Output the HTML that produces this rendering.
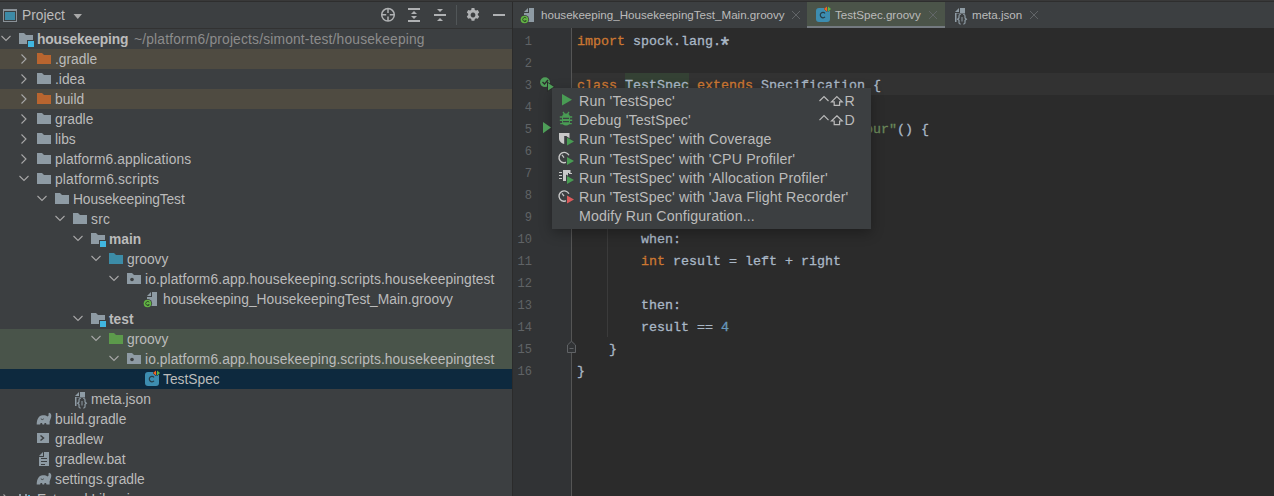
<!DOCTYPE html>
<html><head><meta charset="utf-8">
<style>
html,body{margin:0;padding:0;}
body{width:1274px;height:496px;overflow:hidden;position:relative;background:#3C3F41;font-family:"Liberation Sans",sans-serif;}
.ab{position:absolute;}
.tt{position:absolute;white-space:pre;font-size:13.8px;line-height:20px;color:#BBBBBB;}
.code{position:absolute;white-space:pre;font-family:"Liberation Mono",monospace;font-size:13.33px;line-height:22px;color:#A9B7C6;-webkit-text-stroke:0.3px currentColor;}
.kw{color:#CC7832;}
.str{color:#6A8759;}
.num{color:#6897BB;}
.ln{position:absolute;width:40px;text-align:right;font-family:"Liberation Mono",monospace;font-size:12px;line-height:22px;color:#606366;}
.mi{position:absolute;white-space:pre;font-size:14.2px;letter-spacing:0.15px;line-height:19px;color:#BBBBBB;}
svg{position:absolute;overflow:visible;}
</style></head><body>

<div class="ab" style="left:0;top:0;width:1274px;height:1px;background:#393939"></div>
<div class="ab" style="left:0;top:1px;width:1274px;height:1px;background:#2E2E2E"></div>
<div class="ab" style="left:0;top:28px;width:512px;height:1px;background:#323232"></div>
<svg style="left:0;top:0" width="20" height="28"><rect x="3.5" y="9.5" width="13" height="12" fill="none" stroke="#8A9197" stroke-width="1"/><rect x="3" y="9" width="14" height="2" fill="#8A9197"/><rect x="5" y="12" width="10" height="8" fill="#3D8AA6"/></svg>
<div class="tt" style="left:22px;top:6px;font-size:13.8px;color:#BBBBBB">Project</div>
<svg style="left:0;top:0" width="90" height="28"><path d="M73.5,14 L82,14 L77.75,19 Z" fill="#A8A8A8"/></svg>
<svg style="left:0;top:0" width="512" height="28">
<g stroke="#AFB1B3" fill="none" stroke-width="1.5">
<circle cx="388" cy="14.8" r="6.3"/>
<path d="M388,8.5 V13 M388,16.6 V21.1 M381.7,14.8 H386.2 M389.8,14.8 H394.3"/>
</g>
<g fill="#AFB1B3">
<rect x="408" y="8" width="12" height="2"/><rect x="408" y="20" width="12" height="2"/>
<path d="M411,14 L417,14 L414,11 Z"/><path d="M411,16 L417,16 L414,19 Z"/>
<rect x="434" y="14" width="12" height="2"/>
<path d="M437,9 L443,9 L440,12 Z"/><path d="M437,21 L443,21 L440,18 Z"/>
</g>
<rect x="456" y="5" width="1" height="20" fill="#515658"/>
<rect x="493" y="14" width="12" height="2" fill="#AFB1B3"/>
</svg>
<svg style="left:465px;top:7px" width="16" height="16" viewBox="0 0 16 16">
<path fill="#AFB1B3" fill-rule="evenodd" d="M6.6,1 h2.8 l0.4,1.9 l1.2,0.7 l1.8,-0.6 l1.4,2.4 l-1.4,1.3 v1.4 l1.4,1.3 l-1.4,2.4 l-1.8,-0.6 l-1.2,0.7 l-0.4,1.9 h-2.8 l-0.4,-1.9 l-1.2,-0.7 l-1.8,0.6 l-1.4,-2.4 l1.4,-1.3 v-1.4 l-1.4,-1.3 l1.4,-2.4 l1.8,0.6 l1.2,-0.7 z M8,5.6 a2.4,2.4 0 1,0 0.01,0 z"/>
</svg>
<svg style="left:0;top:0" width="512" height="496"><path d="M1.5,36 L6,40.5 L10.5,36" fill="none" stroke="#A7A7A7" stroke-width="1.1"/><path d="M19,33 H24 L26,35 H33 V44 H19 Z" fill="#8E9BA4"/><rect x="27" y="40" width="8" height="7" fill="#3C3F41"/><rect x="28" y="41" width="6" height="6" fill="#40B6E0"/></svg>
<div class="tt" style="left:37px;top:30px;font-weight:bold;letter-spacing:-0.12px">housekeeping</div>
<div class="tt" style="left:134px;top:30px;color:#8C8C8C;letter-spacing:0.18px">~/platform6/projects/simont-test/housekeeping</div>
<div class="ab" style="left:0;top:49px;width:512px;height:20px;background:#4F4B41"></div>
<svg style="left:0;top:0" width="512" height="496"><path d="M21.5,54.5 L26,59 L21.5,63.5" fill="none" stroke="#A7A7A7" stroke-width="1.1"/><path d="M37,53 H42 L44,55 H51 V64 H37 Z" fill="#B9652F"/></svg>
<div class="tt" style="left:55px;top:50px">.gradle</div>
<svg style="left:0;top:0" width="512" height="496"><path d="M21.5,74.5 L26,79 L21.5,83.5" fill="none" stroke="#A7A7A7" stroke-width="1.1"/><path d="M37,73 H42 L44,75 H51 V84 H37 Z" fill="#8E9BA4"/></svg>
<div class="tt" style="left:55px;top:70px">.idea</div>
<div class="ab" style="left:0;top:89px;width:512px;height:20px;background:#4F4B41"></div>
<svg style="left:0;top:0" width="512" height="496"><path d="M21.5,94.5 L26,99 L21.5,103.5" fill="none" stroke="#A7A7A7" stroke-width="1.1"/><path d="M37,93 H42 L44,95 H51 V104 H37 Z" fill="#B9652F"/></svg>
<div class="tt" style="left:55px;top:90px">build</div>
<svg style="left:0;top:0" width="512" height="496"><path d="M21.5,114.5 L26,119 L21.5,123.5" fill="none" stroke="#A7A7A7" stroke-width="1.1"/><path d="M37,113 H42 L44,115 H51 V124 H37 Z" fill="#8E9BA4"/></svg>
<div class="tt" style="left:55px;top:110px">gradle</div>
<svg style="left:0;top:0" width="512" height="496"><path d="M21.5,134.5 L26,139 L21.5,143.5" fill="none" stroke="#A7A7A7" stroke-width="1.1"/><path d="M37,133 H42 L44,135 H51 V144 H37 Z" fill="#8E9BA4"/></svg>
<div class="tt" style="left:55px;top:130px">libs</div>
<svg style="left:0;top:0" width="512" height="496"><path d="M21.5,154.5 L26,159 L21.5,163.5" fill="none" stroke="#A7A7A7" stroke-width="1.1"/><path d="M37,153 H42 L44,155 H51 V164 H37 Z" fill="#8E9BA4"/></svg>
<div class="tt" style="left:55px;top:150px;letter-spacing:0.09px">platform6.applications</div>
<svg style="left:0;top:0" width="512" height="496"><path d="M19.5,176 L24,180.5 L28.5,176" fill="none" stroke="#A7A7A7" stroke-width="1.1"/><path d="M37,173 H42 L44,175 H51 V184 H37 Z" fill="#8E9BA4"/></svg>
<div class="tt" style="left:55px;top:170px;letter-spacing:0.17px">platform6.scripts</div>
<svg style="left:0;top:0" width="512" height="496"><path d="M37.5,196 L42,200.5 L46.5,196" fill="none" stroke="#A7A7A7" stroke-width="1.1"/><path d="M55,193 H60 L62,195 H69 V204 H55 Z" fill="#8E9BA4"/></svg>
<div class="tt" style="left:73px;top:190px;letter-spacing:-0.12px">HousekeepingTest</div>
<svg style="left:0;top:0" width="512" height="496"><path d="M55.5,216 L60,220.5 L64.5,216" fill="none" stroke="#A7A7A7" stroke-width="1.1"/><path d="M73,213 H78 L80,215 H87 V224 H73 Z" fill="#8E9BA4"/></svg>
<div class="tt" style="left:91px;top:210px;letter-spacing:0.3px">src</div>
<svg style="left:0;top:0" width="512" height="496"><path d="M73.5,236 L78,240.5 L82.5,236" fill="none" stroke="#A7A7A7" stroke-width="1.1"/><path d="M91,233 H96 L98,235 H105 V244 H91 Z" fill="#8E9BA4"/><rect x="99" y="240" width="8" height="7" fill="#3C3F41"/><rect x="100" y="241" width="6" height="6" fill="#40B6E0"/></svg>
<div class="tt" style="left:109px;top:230px;font-weight:bold">main</div>
<svg style="left:0;top:0" width="512" height="496"><path d="M91.5,256 L96,260.5 L100.5,256" fill="none" stroke="#A7A7A7" stroke-width="1.1"/><path d="M109,253 H114 L116,255 H123 V264 H109 Z" fill="#3C8CA7"/></svg>
<div class="tt" style="left:127px;top:250px">groovy</div>
<svg style="left:0;top:0" width="512" height="496"><path d="M109.5,276 L114,280.5 L118.5,276" fill="none" stroke="#A7A7A7" stroke-width="1.1"/><path d="M127,273 H132 L134,275 H141 V284 H127 Z" fill="#8E9BA4"/><circle cx="132" cy="279.5" r="1.8" fill="#3C3F41"/></svg>
<div class="tt" style="left:145px;top:270px;letter-spacing:0.095px">io.platform6.app.housekeeping.scripts.housekeepingtest</div>
<svg style="left:0;top:0" width="512" height="496"><path d="M152,292 H157 V306 H147 V297 H152 Z" fill="#8E9BA4"/><path d="M151,292 V296 H147 Z" fill="#8E9BA4"/><circle cx="147.5" cy="303.5" r="4.6" fill="#3C3F41"/><circle cx="147.5" cy="303.5" r="3.8" fill="#62B543"/><path d="M149.3,302.2 A2,2 0 1,0 149.3,304.8 H147.5" fill="none" stroke="#2F4A2A" stroke-width="1"/></svg>
<div class="tt" style="left:163px;top:290px">housekeeping_HousekeepingTest_Main.groovy</div>
<svg style="left:0;top:0" width="512" height="496"><path d="M73.5,316 L78,320.5 L82.5,316" fill="none" stroke="#A7A7A7" stroke-width="1.1"/><path d="M91,313 H96 L98,315 H105 V324 H91 Z" fill="#8E9BA4"/><rect x="99" y="320" width="8" height="7" fill="#3C3F41"/><rect x="100" y="321" width="6" height="6" fill="#40B6E0"/></svg>
<div class="tt" style="left:109px;top:310px;font-weight:bold">test</div>
<div class="ab" style="left:0;top:329px;width:512px;height:20px;background:#49544A"></div>
<svg style="left:0;top:0" width="512" height="496"><path d="M91.5,336 L96,340.5 L100.5,336" fill="none" stroke="#A7A7A7" stroke-width="1.1"/><path d="M109,333 H114 L116,335 H123 V344 H109 Z" fill="#5C9A4B"/></svg>
<div class="tt" style="left:127px;top:330px">groovy</div>
<div class="ab" style="left:0;top:349px;width:512px;height:20px;background:#49544A"></div>
<svg style="left:0;top:0" width="512" height="496"><path d="M109.5,356 L114,360.5 L118.5,356" fill="none" stroke="#A7A7A7" stroke-width="1.1"/><path d="M127,353 H132 L134,355 H141 V364 H127 Z" fill="#8E9BA4"/><circle cx="132" cy="359.5" r="1.8" fill="#3C3F41"/></svg>
<div class="tt" style="left:145px;top:350px;letter-spacing:0.095px">io.platform6.app.housekeeping.scripts.housekeepingtest</div>
<div class="ab" style="left:0;top:369px;width:512px;height:20px;background:#0D293E"></div>
<svg style="left:0;top:0" width="512" height="496"><rect x="145" y="372" width="14" height="14" rx="3" fill="#3D8DB0"/><path d="M154,377.3 A2.7,2.7 0 1,0 154,380.9" fill="none" stroke="#253E4A" stroke-width="1.2"/><path d="M156,370.5 V375.5 L153,373 Z" fill="#F26522" stroke="#0D293E" stroke-width="1" paint-order="stroke"/><path d="M157,370.5 V375.5 L160,373 Z" fill="#62B543" stroke="#0D293E" stroke-width="1" paint-order="stroke"/></svg>
<div class="tt" style="left:163px;top:370px">TestSpec</div>
<svg style="left:0;top:0" width="512" height="496"><path d="M80,392 H85 V406 H75 V397 H80 Z" fill="#8E9BA4"/><path d="M79,392 V396 H75 Z" fill="#8E9BA4"/><rect x="76.5" y="397.5" width="11" height="11" fill="#3C3F41"/><path d="M80.8,398.5 H80.2 Q79,398.5 79,400 V402 L77.6,403.2 L79,404.4 V406.5 Q79,408 80.2,408 H80.8 M83.2,398.5 H83.8 Q85,398.5 85,400 V402 L86.4,403.2 L85,404.4 V406.5 Q85,408 83.8,408 H83.2" fill="none" stroke="#8E9BA4" stroke-width="1.2"/><path d="M82,401 V405.5" stroke="#8E9BA4" stroke-width="1"/></svg>
<div class="tt" style="left:91px;top:390px">meta.json</div>
<svg style="left:0;top:0" width="512" height="496"><path d="M36.7,424.6 C36.7,419 39,415.3 42.5,415.2 C45,415.1 46.5,415.5 47.5,416.6 C48.5,415.8 49.3,414.8 48.3,414.2 L49,412.8 C51.6,413 52,416.5 50.3,419.5 L49.6,421.5 V424.6 H46.5 L46,423 H44.6 L44.1,424.6 H42.5 L42,423 H40.6 L40.1,424.6 Z" fill="#8E9BA4"/><path d="M40.8,418.8 Q42.3,420.4 43.8,418.8" fill="none" stroke="#3C3F41" stroke-width="0.9"/></svg>
<div class="tt" style="left:55px;top:410px">build.gradle</div>
<svg style="left:0;top:0" width="512" height="496"><rect x="37" y="433" width="12" height="10" fill="#8E9BA4"/><path d="M40.5,435.5 L43.5,438 L40.5,440.5" fill="none" stroke="#3C3F41" stroke-width="1.5"/></svg>
<div class="tt" style="left:55px;top:430px">gradlew</div>
<svg style="left:0;top:0" width="512" height="496"><path d="M44,452 H49 V466 H39 V457 H44 Z" fill="#8E9BA4"/><path d="M43,452 V456 H39 Z" fill="#8E9BA4"/><path d="M41,458.5 H47 M41,461.5 H47 M41,464.5 H45" stroke="#3C3F41" stroke-width="1"/></svg>
<div class="tt" style="left:55px;top:450px">gradlew.bat</div>
<svg style="left:0;top:0" width="512" height="496"><path d="M36.7,484.6 C36.7,479 39,475.3 42.5,475.2 C45,475.1 46.5,475.5 47.5,476.6 C48.5,475.8 49.3,474.8 48.3,474.2 L49,472.8 C51.6,473 52,476.5 50.3,479.5 L49.6,481.5 V484.6 H46.5 L46,483 H44.6 L44.1,484.6 H42.5 L42,483 H40.6 L40.1,484.6 Z" fill="#8E9BA4"/><path d="M40.8,478.8 Q42.3,480.4 43.8,478.8" fill="none" stroke="#3C3F41" stroke-width="0.9"/></svg>
<div class="tt" style="left:55px;top:470px">settings.gradle</div>
<svg style="left:0;top:0" width="512" height="496"><path d="M3.5,494.5 L8,499 L3.5,503.5" fill="none" stroke="#A7A7A7" stroke-width="1.1"/><rect x="19" y="494" width="2" height="11" fill="#8E9BA4"/><rect x="22" y="496" width="2" height="9" fill="#62B543"/><rect x="25" y="494" width="2" height="11" fill="#8E9BA4"/><rect x="28" y="495" width="2" height="10" fill="#40B6E0"/></svg>
<div class="tt" style="left:37px;top:490px">External Libraries</div>
<div class="ab" style="left:512px;top:2px;width:1px;height:494px;background:#2B2B2B"></div>
<div class="ab" style="left:513px;top:2px;width:761px;height:26px;background:#3C3F41"></div>
<div class="ab" style="left:807px;top:2px;width:138px;height:26px;background:#4B5449"></div>
<div class="ab" style="left:807px;top:26px;width:138px;height:3px;background:#747A80"></div>
<div class="tt" style="left:541px;top:5px;font-size:11.6px;line-height:20px">housekeeping_HousekeepingTest_Main.groovy</div>
<div class="tt" style="left:835px;top:5px;font-size:11.6px;line-height:20px">TestSpec.groovy</div>
<div class="tt" style="left:972px;top:5px;font-size:11.6px;line-height:20px">meta.json</div>
<svg style="left:0;top:0" width="1274" height="30"><path d="M529,8 H534 V22 H524 V13 H529 Z" fill="#8E9BA4"/><path d="M528,8 V12 H524 Z" fill="#8E9BA4"/><circle cx="524.5" cy="19.5" r="4.6" fill="#3C3F41"/><circle cx="524.5" cy="19.5" r="3.8" fill="#62B543"/><path d="M526.3,18.2 A2,2 0 1,0 526.3,20.8 H524.5" fill="none" stroke="#2F4A2A" stroke-width="1"/><rect x="816" y="8" width="14" height="14" rx="3" fill="#3D8DB0"/><path d="M825,13.3 A2.7,2.7 0 1,0 825,16.9" fill="none" stroke="#253E4A" stroke-width="1.2"/><path d="M827,6.5 V11.5 L824,9 Z" fill="#F26522" stroke="#4B5449" stroke-width="1" paint-order="stroke"/><path d="M828,6.5 V11.5 L831,9 Z" fill="#62B543" stroke="#4B5449" stroke-width="1" paint-order="stroke"/><path d="M960,8 H965 V22 H955 V13 H960 Z" fill="#8E9BA4"/><path d="M959,8 V12 H955 Z" fill="#8E9BA4"/><rect x="956.5" y="13.5" width="11" height="11" fill="#3C3F41"/><path d="M960.8,14.5 H960.2 Q959,14.5 959,16 V18 L957.6,19.2 L959,20.4 V22.5 Q959,24 960.2,24 H960.8 M963.2,14.5 H963.8 Q965,14.5 965,16 V18 L966.4,19.2 L965,20.4 V22.5 Q965,24 963.8,24 H963.2" fill="none" stroke="#8E9BA4" stroke-width="1.2"/><path d="M962,17 V21.5" stroke="#8E9BA4" stroke-width="1"/></svg>
<svg style="left:0;top:0" width="1274" height="30"><path d="M792,11 L800,19 M800,11 L792,19" stroke="#65696C" stroke-width="0.9" fill="none"/><path d="M929,11 L937,19 M937,11 L929,19" stroke="#65696C" stroke-width="0.9" fill="none"/><path d="M1030,11 L1038,19 M1038,11 L1030,19" stroke="#65696C" stroke-width="0.9" fill="none"/></svg>
<div class="ab" style="left:513px;top:28px;width:761px;height:468px;background:#2B2B2B"></div>
<div class="ab" style="left:513px;top:28px;width:58px;height:468px;background:#313335"></div>
<div class="ab" style="left:571px;top:28px;width:1px;height:468px;background:#555555"></div>
<div class="ab" style="left:572px;top:73px;width:702px;height:22px;background:#323232"></div>
<div class="ab" style="left:625px;top:73px;width:64px;height:22px;background:#344134"></div>
<div class="ln" style="left:492px;top:30.5px">1</div>
<div class="ln" style="left:492px;top:52.5px">2</div>
<div class="ln" style="left:492px;top:74.5px">3</div>
<div class="ln" style="left:492px;top:96.5px">4</div>
<div class="ln" style="left:492px;top:118.5px">5</div>
<div class="ln" style="left:492px;top:140.5px">6</div>
<div class="ln" style="left:492px;top:162.5px">7</div>
<div class="ln" style="left:492px;top:184.5px">8</div>
<div class="ln" style="left:492px;top:206.5px">9</div>
<div class="ln" style="left:492px;top:228.5px">10</div>
<div class="ln" style="left:492px;top:250.5px">11</div>
<div class="ln" style="left:492px;top:272.5px">12</div>
<div class="ln" style="left:492px;top:294.5px">13</div>
<div class="ln" style="left:492px;top:316.5px">14</div>
<div class="ln" style="left:492px;top:338.5px">15</div>
<div class="ln" style="left:492px;top:360.5px">16</div>
<div class="code" style="left:577px;top:30.5px"><span class="kw">import</span> spock.lang.<span style="display:inline-block;width:8px;transform:translate(0px,4.4px) scale(1.6);transform-origin:50% 40%">*</span></div>
<div class="code" style="left:577px;top:74.5px"><span class="kw">class</span> TestSpec <span class="kw">extends</span> Specification {</div>
<div class="code" style="left:577px;top:118.5px">    <span class="kw">def</span> <span class="str">"two plus two should equal four"</span>() {</div>
<div class="code" style="left:577px;top:140.5px">        given:</div>
<div class="code" style="left:577px;top:162.5px">        <span class="kw">int</span> left = 2</div>
<div class="code" style="left:577px;top:184.5px">        <span class="kw">int</span> right = 2</div>
<div class="code" style="left:577px;top:228.5px">        when:</div>
<div class="code" style="left:577px;top:250.5px">        <span class="kw">int</span> result = left + right</div>
<div class="code" style="left:577px;top:294.5px">        then:</div>
<div class="code" style="left:577px;top:316.5px">        result == <span class="num">4</span></div>
<div class="code" style="left:577px;top:338.5px">    }</div>
<div class="code" style="left:577px;top:360.5px">}</div>
<div class="ab" style="left:607px;top:139px;width:1px;height:198px;background:#3B3B3B"></div>
<div class="ab" style="left:552px;top:88px;width:319px;height:141px;background:#3C3F41;box-shadow:0 4px 12px rgba(0,0,0,0.3)"></div>
<div class="mi" style="left:579px;top:92.0px">Run 'TestSpec'</div>
<div class="mi" style="left:579px;top:111.2px">Debug 'TestSpec'</div>
<div class="mi" style="left:579px;top:130.4px">Run 'TestSpec' with Coverage</div>
<div class="mi" style="left:579px;top:149.6px">Run 'TestSpec' with 'CPU Profiler'</div>
<div class="mi" style="left:579px;top:168.8px">Run 'TestSpec' with 'Allocation Profiler'</div>
<div class="mi" style="left:579px;top:188.0px">Run 'TestSpec' with 'Java Flight Recorder'</div>
<div class="mi" style="left:579px;top:207.2px">Modify Run Configuration...</div>
<svg style="left:0;top:0" width="1274" height="300"><path d="M819.5,101 L824,96.5 L828.5,101" fill="none" stroke="#BBBBBB" stroke-width="1.2"/><path d="M836.9,96.6 L842.3,101.8 H839.6 V105.4 H834.2 V101.8 H831.5 Z" fill="none" stroke="#BBBBBB" stroke-width="1.2" stroke-linejoin="miter"/><path d="M819.5,120.2 L824,115.7 L828.5,120.2" fill="none" stroke="#BBBBBB" stroke-width="1.2"/><path d="M836.9,115.8 L842.3,121.0 H839.6 V124.60000000000001 H834.2 V121.0 H831.5 Z" fill="none" stroke="#BBBBBB" stroke-width="1.2" stroke-linejoin="miter"/></svg>
<div class="mi" style="left:844.5px;top:92px;letter-spacing:0">R</div>
<div class="mi" style="left:844.5px;top:111.2px;letter-spacing:0">D</div>
<svg style="left:0;top:0" width="1274" height="496"><path d="M562,94 L572,99.8 L562,105.6 Z" fill="#499C54"/><path d="M563,112 L565,114.8 M569,112 L567,114.8" stroke="#499C54" stroke-width="1.3"/><rect x="562" y="113.6" width="8" height="12" rx="4" fill="#499C54"/><path d="M559.8,117 H562.5 M569.5,117 H572.2 M559.8,120.3 H562.5 M569.5,120.3 H572.2 M560.2,123.6 H563 M569,123.6 H571.8" stroke="#499C54" stroke-width="1.4"/><path d="M563,118.4 H569 M563,121.6 H569" stroke="#3C3F41" stroke-width="1.1"/><path d="M559,133 H569.5 V141.5 H566.5 V136 H564.2 V144 C561.5,143.3 559,141.5 559,138.5 Z" fill="#C9C9C9"/><path d="M566,136.0 V147.0 L575,141.5 Z" fill="#3C3F41"/><path d="M567,137.5 V145.5 L574,141.5 Z" fill="#499C54"/><path d="M567.6,161.5 A5.2,5.2 0 1,1 568.9,155.3" fill="none" stroke="#C9C9C9" stroke-width="1.4"/><path d="M564,157.7 L562,154.9" stroke="#C9C9C9" stroke-width="1.2"/><path d="M566,155.5 V166.5 L575,161 Z" fill="#3C3F41"/><path d="M567,157 V165 L574,161 Z" fill="#499C54"/><path d="M563,170 H570.5 V173 H568 V181 H563 Z" fill="#C9C9C9"/><path d="M559,172.5 H562 M559,175.5 H562 M559,178.5 H562 M569,173.5 H572" stroke="#C9C9C9" stroke-width="1"/><path d="M566,174.5 V185.5 L575,180 Z" fill="#3C3F41"/><path d="M567,176 V184 L574,180 Z" fill="#499C54"/><path d="M567.6,200 A5.2,5.2 0 1,1 568.9,193.8" fill="none" stroke="#C9C9C9" stroke-width="1.4"/><path d="M564,196.2 L562,193.4" stroke="#C9C9C9" stroke-width="1.2"/><path d="M566,194.0 V205.0 L575,199.5 Z" fill="#3C3F41"/><path d="M567,195.5 V203.5 L574,199.5 Z" fill="#DB5C5C"/></svg>
<svg style="left:0;top:0" width="1274" height="496"><circle cx="545" cy="82.2" r="5.7" fill="#323232"/><circle cx="545" cy="82.2" r="4.9" fill="#4E9E58"/><path d="M542.5,82 L544.5,84 L548,80" fill="none" stroke="#2B2B2B" stroke-width="1.4"/><path d="M547,81.5 V92 L555,86.8 Z" fill="#2B2B2B"/><path d="M548,83 V90.6 L553.8,86.8 Z" fill="#4E9E58"/><path d="M543,122 L551,127.6 L543,133.3 Z" fill="#4E9E58"/><path d="M567.5,352.5 V345 L571.5,341.2 L575.5,345 V352.5 Z" fill="#313335" stroke="#606366" stroke-width="1"/><path d="M569.5,348.5 H573.5" stroke="#606366" stroke-width="1"/></svg>
</body></html>
